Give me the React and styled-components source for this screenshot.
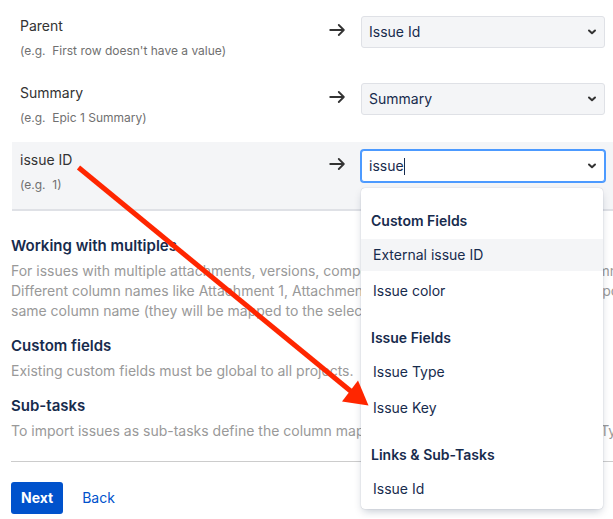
import React, { useState } from 'react';
import styled, { createGlobalStyle } from 'styled-components';

const GlobalStyle = createGlobalStyle`
  * {
    box-sizing: border-box;
  }

  body {
    margin: 0;
    background: #ffffff;
    color: #333333;
    font-family: Inter, 'Liberation Sans', sans-serif;
    font-size: 14px;
    line-height: 20px;
  }
`;

const Page = styled.main`
  position: relative;
  padding: 8px 0 4px 11px;
  overflow: hidden;
`;

const MappingList = styled.div`
  display: flex;
  flex-direction: column;
  margin-left: 1px;
  border-bottom: 2px solid #dfe1e6;
`;

const MappingRow = styled.div`
  display: flex;
  align-items: flex-start;
  height: 67px;
  padding: 8px;
  background: ${props => props.$active ? '#f4f5f7' : 'transparent'};
`;

const FieldInfo = styled.div`
  display: flex;
  flex-direction: column;
  flex: 1;
  gap: 5px;
`;

const FieldName = styled.label`
  color: #333333;
`;

const FieldExample = styled.span`
  font-size: 12px;
  color: #707070;
  white-space: pre;
`;

const RowArrow = styled.svg`
  width: 16px;
  height: 16px;
  margin: 6px 16px 0 0;
`;

const Control = styled.div`
  position: relative;
  width: 244px;
`;

const Select = styled.select`
  appearance: none;
  display: block;
  width: 100%;
  height: 32px;
  padding: 0 28px 0 7px;
  border: 1px solid #dfe1e6;
  border-radius: 3px;
  background: #f4f5f7;
  color: #172b4d;
  font: inherit;
`;

const Combobox = styled.div`
  display: flex;
  align-items: center;
  height: 32px;
  padding: 0 28px 0 7px;
  border: 1px solid #4c9aff;
  border-radius: 3px;
  box-shadow: 0 0 0 1px #4c9aff;
  background: #ffffff;
`;

const ComboInput = styled.input`
  field-sizing: content;
  max-width: 100%;
  padding: 0;
  border: none;
  outline: none;
  background: none;
  color: #172b4d;
  caret-color: transparent;
  font: inherit;
`;

const Caret = styled.span`
  width: 1px;
  height: 17px;
  background: #172b4d;
`;

const Chevron = styled.svg`
  position: absolute;
  top: 12px;
  right: 8px;
  width: 10px;
  height: 8px;
  pointer-events: none;
`;

const Menu = styled.div`
  position: absolute;
  top: 38px;
  left: 0;
  z-index: 1;
  width: 242px;
  padding-top: 6px;
  border-radius: 4px;
  background: #ffffff;
  box-shadow: 0 4px 8px -2px rgba(9, 30, 66, 0.25), 0 0 1px rgba(9, 30, 66, 0.31);
`;

const MenuGroup = styled.div`
  padding-top: 17px;
`;

const MenuHeading = styled.div`
  padding: 0 10px;
  margin-bottom: 8px;
  font-weight: 600;
  color: #172b4d;
`;

const MenuItem = styled.div`
  margin-bottom: 4px;
  padding: 6px 12px;
  background: ${props => props.$focused ? '#f4f5f7' : 'transparent'};
  color: #172b4d;
  cursor: pointer;
`;

const HelpSections = styled.div`
  display: flex;
  flex-direction: column;
  gap: 15px;
  padding: 25px 0 20px;
  border-bottom: 1px solid #cccccc;
`;

const HelpTitle = styled.h2`
  margin: 0 0 5px;
  font-size: 15px;
  line-height: 20px;
  font-weight: 600;
  color: #172b4d;
`;

const HelpText = styled.p`
  margin: 0;
  color: #999999;
  white-space: pre;
`;

const Actions = styled.div`
  display: flex;
  gap: 9px;
  padding-top: 20px;
`;

const Button = styled.button`
  height: 32px;
  padding: 0 10px;
  border: none;
  border-radius: 3px;
  background: ${props => props.$primary ? '#0052cc' : 'none'};
  color: ${props => props.$primary ? '#ffffff' : '#0052cc'};
  font: inherit;
  font-weight: ${props => props.$primary ? 700 : 400};
  cursor: pointer;
`;

const Pointer = styled.svg`
  position: absolute;
  top: 0;
  left: 0;
  z-index: 2;
  width: 400px;
  height: 420px;
  pointer-events: none;
`;

const mappings = [
  { id: 'parent', name: 'Parent', example: "First row doesn't have a value", value: 'Issue Id' },
  { id: 'summary', name: 'Summary', example: 'Epic 1 Summary', value: 'Summary' },
  { id: 'issue-id', name: 'issue ID', example: '1', search: true },
];

const groups = [
  { name: 'Custom Fields', items: ['External issue ID', 'Issue color'] },
  { name: 'Issue Fields', items: ['Issue Type', 'Issue Key'] },
  { name: 'Links & Sub-Tasks', items: ['Issue Id'] },
];

const help = [
  {
    title: 'Working with multiples',
    text: [
      'For issues with multiple attachments, versions, components, labels, watchers or other comments',
      'Different column names like Attachment 1, Attachment 2 are supported with all of the components',
      'same column name (they will be mapped to the selected field).',
    ],
  },
  {
    title: 'Custom fields',
    text: ['Existing custom fields must be global to all projects.'],
  },
  {
    title: 'Sub-tasks',
    text: ['To import issues as sub-tasks define the column mapping for the Parent Id and the Issue Type'],
  },
];

const ChevronIcon = () => (
  <Chevron viewBox="0 0 10 8" fill="none" aria-hidden="true">
    <path d="M2 2.5 5 5.3 8 2.5" stroke="#333333" strokeWidth="2" strokeLinecap="round" strokeLinejoin="round" />
  </Chevron>
);

const FieldSearch = ({ id }) => {
  const [query, setQuery] = useState('issue');

  return (
    <Control>
      <Combobox>
        <ComboInput
          id={id}
          role="combobox"
          aria-expanded="true"
          aria-controls="field-menu"
          autoComplete="off"
          value={query}
          onChange={(e) => setQuery(e.target.value)}
        />
        <Caret />
      </Combobox>
      <ChevronIcon />
      <Menu id="field-menu" role="listbox" aria-label="Fields">
        {groups.map(group => (
          <MenuGroup key={group.name} role="group" aria-label={group.name}>
            <MenuHeading>{group.name}</MenuHeading>
            {group.items.map(item => (
              <MenuItem
                key={item}
                role="option"
                aria-selected={item === 'External issue ID'}
                $focused={item === 'External issue ID'}
              >
                {item}
              </MenuItem>
            ))}
          </MenuGroup>
        ))}
      </Menu>
    </Control>
  );
};

const App = () => (
  <>
    <GlobalStyle />
    <Page>
      <MappingList>
        {mappings.map(row => (
          <MappingRow key={row.id} $active={row.search}>
            <FieldInfo>
              <FieldName htmlFor={row.id}>{row.name}</FieldName>
              <FieldExample>{`(e.g.  ${row.example})`}</FieldExample>
            </FieldInfo>
            <RowArrow viewBox="0 0 16 16" fill="none" aria-hidden="true">
              <path
                d="M1.2 8H14.5M9.8 3 14.8 8 9.8 13"
                stroke="#333333"
                strokeWidth="1.8"
                strokeLinecap="round"
                strokeLinejoin="round"
              />
            </RowArrow>
            {row.search ? (
              <FieldSearch id={row.id} />
            ) : (
              <Control>
                <Select id={row.id} defaultValue={row.value}>
                  <option>{row.value}</option>
                </Select>
                <ChevronIcon />
              </Control>
            )}
          </MappingRow>
        ))}
      </MappingList>

      <HelpSections>
        {help.map(section => (
          <section key={section.title}>
            <HelpTitle>{section.title}</HelpTitle>
            <HelpText>{section.text.join('\n')}</HelpText>
          </section>
        ))}
      </HelpSections>

      <Actions>
        <Button type="button" $primary>Next</Button>
        <Button type="button">Back</Button>
      </Actions>

      <Pointer viewBox="0 0 400 420" aria-hidden="true">
        <path d="M78.5 167.5 353 393" stroke="#ff2600" strokeWidth="5" />
        <path d="M368.5 405.5 342 401.5 358 380.5Z" fill="#ff2600" />
      </Pointer>
    </Page>
  </>
);

export default App;
